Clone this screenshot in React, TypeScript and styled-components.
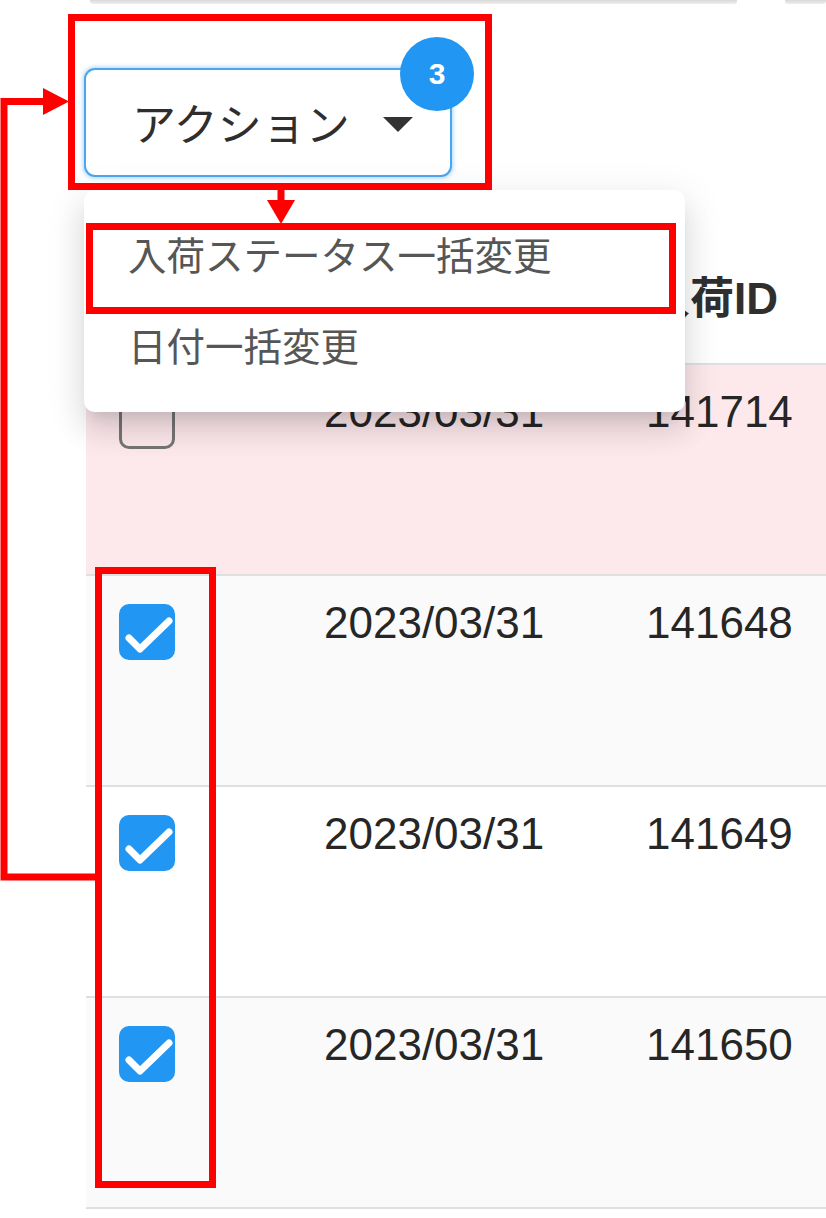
import React from "react";
import styled, { createGlobalStyle } from "styled-components";

const GlobalStyle = createGlobalStyle`
  html, body { margin: 0; padding: 0; background: #ffffff; }
  body { font-family: "Liberation Sans", "Noto Sans CJK JP", sans-serif; }
  * { box-sizing: border-box; }
`;

const Page = styled.div`
  position: relative;
  width: 826px;
  height: 1218px;
  overflow: hidden;
  background: #ffffff;
`;

const TopStrip = styled.div`
  display: flex;
  gap: 48px;
  height: 4px;
  padding-left: 90px;
`;

const StripBar = styled.div<{ $width?: number }>`
  height: 4px;
  ${(p) => (p.$width ? `width: ${p.$width}px;` : "flex: 1;")}
  background: linear-gradient(#d9d9d9, #efefef);
  border-radius: 0 0 3px 3px;
`;

const Toolbar = styled.div`
  display: flex;
  padding: 64px 0 0 84px;
`;

const ActionWrap = styled.div`
  position: relative;
`;

const ActionButton = styled.button`
  display: flex;
  align-items: center;
  width: 368px;
  height: 109px;
  padding: 0 0 0 46px;
  margin: 0;
  background: #ffffff;
  border: 2px solid #4aa6ee;
  border-radius: 11px;
  box-shadow: 0 0 4px 1px rgba(66, 165, 245, 0.45);
  font-family: "Liberation Sans", "Noto Sans CJK JP", sans-serif;
  font-size: 44px;
  color: #2e2e2e;
  cursor: pointer;
`;

const ButtonLabel = styled.span`
  line-height: 1;
  margin-top: 6px;
`;

const Caret = styled.span`
  width: 0;
  height: 0;
  margin-left: 33px;
  margin-top: 4px;
  border-left: 15px solid transparent;
  border-right: 15px solid transparent;
  border-top: 15px solid #333333;
`;

const Badge = styled.span`
  position: absolute;
  top: -31px;
  right: -22px;
  width: 74px;
  height: 74px;
  border-radius: 50%;
  background: #2196f3;
  color: #ffffff;
  display: flex;
  align-items: center;
  justify-content: center;
  font-family: "Liberation Sans", sans-serif;
  font-weight: 700;
  font-size: 30px;
`;

const Table = styled.div`
  margin: 73px 0 0 86px;
  width: 900px;
`;

const Row = styled.div<{ $tone?: "alert" | "alt" | "plain" | "head" }>`
  display: grid;
  grid-template-columns: 238px 322px 1fr;
  align-items: start;
  height: ${(p) => (p.$tone === "head" ? "115px" : "211px")};
  border-bottom: 2px solid #e0e0e0;
  background: ${(p) =>
    p.$tone === "alert" ? "#fde8ec" : p.$tone === "alt" ? "#fafafa" : "#ffffff"};
`;

const Cell = styled.div<{ $head?: boolean }>`
  padding-top: ${(p) => (p.$head ? "24px" : "22px")};
  font-size: 44px;
  line-height: 50px;
  font-weight: ${(p) => (p.$head ? 700 : 400)};
  color: ${(p) => (p.$head ? "#2f2f2f" : "#262626")};
  white-space: nowrap;
`;

const CheckCell = styled.div`
  padding: 28px 0 0 33px;
`;

const CheckBox = styled.span<{ $checked?: boolean }>`
  display: flex;
  width: 56px;
  height: 56px;
  border-radius: 10px;
  background: ${(p) => (p.$checked ? "#2196f3" : "transparent")};
  border: ${(p) => (p.$checked ? "none" : "3px solid #757575")};
`;

const Menu = styled.div`
  position: absolute;
  left: 84px;
  top: 190px;
  width: 601px;
  padding: 22px 0 18px;
  background: #ffffff;
  border-radius: 11px;
  box-shadow: 0 12px 14px -8px rgba(0, 0, 0, 0.12),
    0 20px 28px 3px rgba(0, 0, 0, 0.08), 0 8px 38px 6px rgba(0, 0, 0, 0.07);
`;

const MenuItem = styled.div`
  padding: 16px 44px 17px;
  font-family: "Liberation Sans", "Noto Sans CJK JP", sans-serif;
  font-size: 38.5px;
  line-height: 1.5;
  color: #565656;
  white-space: nowrap;
`;

const Annotations = styled.svg`
  position: absolute;
  left: 0;
  top: 0;
  pointer-events: none;
`;

const Check = () => (
  <svg width="56" height="56" viewBox="0 0 56 56">
    <path
      d="M10 34 L21 45 L50 17"
      fill="none"
      stroke="#ffffff"
      strokeWidth="7"
      strokeLinecap="round"
      strokeLinejoin="round"
    />
  </svg>
);

const rows = [
  { tone: "alert" as const, checked: false, date: "2023/03/31", id: "141714" },
  { tone: "alt" as const, checked: true, date: "2023/03/31", id: "141648" },
  { tone: "plain" as const, checked: true, date: "2023/03/31", id: "141649" },
  { tone: "alt" as const, checked: true, date: "2023/03/31", id: "141650" },
];

export default function App() {
  return (
    <Page>
      <GlobalStyle />
      <TopStrip>
        <StripBar $width={647} />
        <StripBar />
      </TopStrip>
      <Toolbar>
        <ActionWrap>
          <ActionButton>
            <ButtonLabel>アクション</ButtonLabel>
            <Caret />
          </ActionButton>
          <Badge>3</Badge>
        </ActionWrap>
      </Toolbar>
      <Table>
        <Row $tone="head">
          <CheckCell />
          <Cell $head>入荷日</Cell>
          <Cell $head>入荷ID</Cell>
        </Row>
        {rows.map((r) => (
          <Row key={r.id} $tone={r.tone}>
            <CheckCell>
              <CheckBox $checked={r.checked}>{r.checked && <Check />}</CheckBox>
            </CheckCell>
            <Cell>{r.date}</Cell>
            <Cell>{r.id}</Cell>
          </Row>
        ))}
      </Table>
      <Menu>
        <MenuItem>入荷ステータス一括変更</MenuItem>
        <MenuItem>日付一括変更</MenuItem>
      </Menu>
      <Annotations width="826" height="1218" viewBox="0 0 826 1218">
        <g fill="none" stroke="#ff0000" strokeWidth="7">
          <rect x="71.5" y="17.5" width="417" height="169" />
          <rect x="89.5" y="226.5" width="583" height="84" />
          <rect x="98.5" y="570.5" width="114" height="614" />
          <line x1="281" y1="189" x2="281" y2="206" />
          <polyline points="95,877 4,877 4,101.5 46,101.5" strokeLinejoin="miter" />
        </g>
        <g fill="#ff0000">
          <polygon points="267,200 295,200 281,224" />
          <polygon points="43,88 69,101.5 43,115" />
        </g>
      </Annotations>
    </Page>
  );
}
